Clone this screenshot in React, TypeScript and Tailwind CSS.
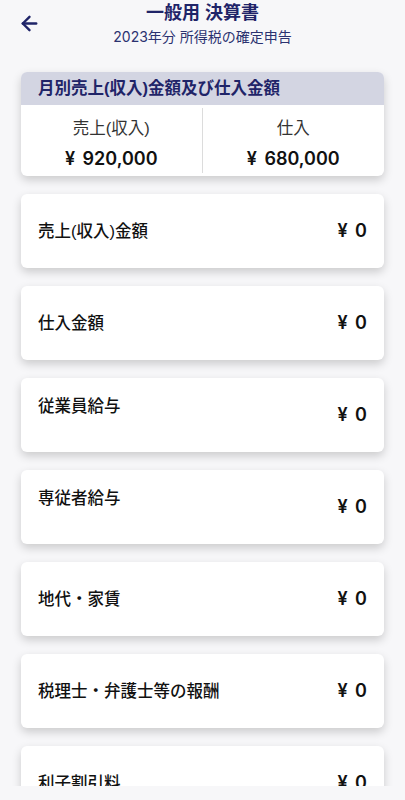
import { ArrowLeft } from "lucide-react";

const rows = [
  { label: "売上(収入)金額", top: false },
  { label: "仕入金額", top: false },
  { label: "従業員給与", top: true },
  { label: "専従者給与", top: true },
  { label: "地代・家賃", top: false },
  { label: "税理士・弁護士等の報酬", top: false },
  { label: "利子割引料", top: false },
];

const num = { fontFamily: 'Inter, "Noto Sans CJK JP", sans-serif' };

const App = () => {
  return (
    <div
      className="min-h-[800px] bg-[#f7f7f9] pb-10"
      style={{ fontFamily: '"Liberation Sans", "Noto Sans CJK JP", sans-serif' }}
    >
      {/* Header */}
      <header className="grid grid-cols-[56px_1fr_56px] pt-[3px]">
        <div className="flex items-start pl-[18px] pt-[9px]">
          <ArrowLeft size={23} strokeWidth={2.5} className="text-[#1f2468]" />
        </div>
        <div className="flex flex-col items-center gap-[4px]">
          <h1 className="text-[18px] leading-[20px] font-bold text-[#1f2468]">一般用 決算書</h1>
          <p className="text-[14px] leading-[20px] text-[#2b3270]">
            <span style={num}>2023</span>年分 所得税の確定申告
          </p>
        </div>
        <div />
      </header>

      {/* Summary card */}
      <section className="mx-[21px] mt-[25px] rounded-md bg-white overflow-hidden shadow-[0_4px_10px_rgba(0,0,0,0.18)]">
        <div className="h-[33px] bg-[#d3d5e2] px-[17px] flex items-center">
          <span className="text-[16.5px] font-bold text-[#1f2468]">月別売上(収入)金額及び仕入金額</span>
        </div>
        <div className="grid grid-cols-2 h-[71px] py-[3px]">
          <div className="flex flex-col items-center pt-[10px] gap-[10px] border-r border-[#dcdcdc]">
            <span className="text-[16.5px] leading-[20px] text-[#333]">売上(収入)</span>
            <span style={num} className="text-[18px] leading-[22px] font-semibold text-[#111] [word-spacing:3px]">¥ 920,000</span>
          </div>
          <div className="flex flex-col items-center pt-[10px] gap-[10px]">
            <span className="text-[16.5px] leading-[20px] text-[#333]">仕入</span>
            <span style={num} className="text-[18px] leading-[22px] font-semibold text-[#111] [word-spacing:3px]">¥ 680,000</span>
          </div>
        </div>
      </section>

      {/* Rows */}
      <div className="mt-[18px] flex flex-col gap-[18px] px-[21px]">
        {rows.map((r) => (
          <div
            key={r.label}
            className="h-[74px] rounded-md bg-white px-[17px] flex justify-between items-center shadow-[0_4px_10px_rgba(0,0,0,0.18)]"
          >
            <span
              className={`text-[16.5px] leading-[20px] font-medium text-[#111] ${
                r.top ? "self-start pt-[18px]" : ""
              }`}
            >
              {r.label}
            </span>
            <span style={num} className="text-[18px] leading-[22px] font-semibold text-[#111] [word-spacing:3px]">¥ 0</span>
          </div>
        ))}
      </div>

      <div className="fixed bottom-0 left-0 right-0 h-[14px] bg-[#f7f7f9]" />
    </div>
  );
};

export default App;
